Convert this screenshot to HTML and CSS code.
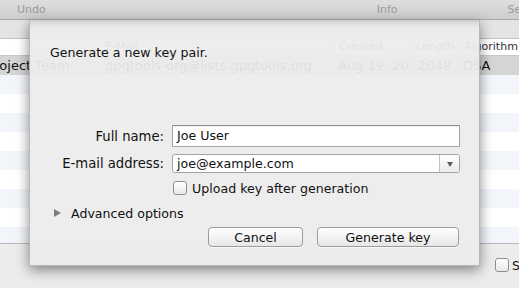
FILE: index.html
```html
<!DOCTYPE html>
<html lang="en">
<head>
  <meta charset="UTF-8">
  <title>GPG Keychain</title>
  <link rel="stylesheet" href="styles.css">
</head>
<body>
  <div class="window">
    <div class="toolbar">
      <span class="tool tool-undo">Undo</span>
      <span class="tool tool-info">Info</span>
      <span class="tool tool-search">Search</span>
    </div>
    <div class="filterbar"></div>

    <div class="keylist">
      <div class="keyrow keyhead">
        <span class="cell c-name"></span>
        <span class="cell c-mail">E-Mail</span>
        <span class="cell c-created">Created</span>
        <span class="cell c-length">Length</span>
        <span class="cell c-algo">Algorithm</span>
      </div>
      <div class="keyrow selected">
        <span class="cell c-name">GPGTools Project Team</span>
        <span class="cell c-mail">gpgtools-org@lists.gpgtools.org</span>
        <span class="cell c-created">Aug 19, 2010</span>
        <span class="cell c-length">2048</span>
        <span class="cell c-algo">DSA</span>
      </div>
      <div class="keyrow"></div>
      <div class="keyrow"></div>
      <div class="keyrow"></div>
      <div class="keyrow"></div>
      <div class="keyrow"></div>
      <div class="keyrow"></div>
      <div class="keyrow"></div>
      <div class="keyrow"></div>
      <div class="keyrow"></div>
    </div>

    <div class="statusbar">
      <label class="status-check"><span class="checkbox"></span>Show secret keys only</label>
    </div>
  </div>

  <!-- sheet dropped from the toolbar -->
  <div class="sheet">
    <p class="sheet-title">Generate a new key pair.</p>

    <div class="form">
      <label class="form-label" for="fullname">Full name:</label>
      <div class="textfield" id="fullname">Joe User</div>

      <label class="form-label" for="email">E-mail address:</label>
      <div class="combo" id="email">
        <span class="combo-value">joe@example.com</span>
        <span class="combo-arrow"></span>
      </div>

      <span></span>
      <label class="check-row"><span class="checkbox"></span>Upload key after generation</label>
    </div>

    <div class="disclosure">
      <span class="disclosure-arrow"></span>
      <span>Advanced options</span>
    </div>

    <div class="buttons">
      <button class="btn btn-cancel">Cancel</button>
      <button class="btn btn-generate">Generate key</button>
    </div>
  </div>
</body>
</html>
```

FILE: styles.css
```css
body {
  margin: 0;
  width: 519px;
  height: 288px;
  overflow: hidden;
  font-family: 'DejaVu Sans', sans-serif;
  font-size: 12.6px;
  color: #111111;
  background-color: #ececec;
  position: relative;
}

.window {
  display: flex;
  flex-direction: column;
  height: 288px;
}

.toolbar {
  height: 19px;
  border-bottom: 1px solid #a9a9a9;
  background: linear-gradient(#dedede, #cdcdcd);
  display: flex;
  align-items: center;
  white-space: nowrap;
  overflow: hidden;
}

.tool {
  font-size: 11px;
  color: #9a9a9a;
}

.tool-undo {
  margin-left: 17px;
}

.tool-info {
  margin-left: 331px;
}

.tool-search {
  margin-left: 110px;
}

.filterbar {
  height: 18px;
  background-color: #e4e4e4;
  border-bottom: 1px solid #c2c2c2;
}

.keylist {
  flex-grow: 1;
  overflow: hidden;
  background-color: #ffffff;
  font-size: 13px;
}

.keyrow {
  display: flex;
  height: 19px;
  align-items: center;
  white-space: nowrap;
}

.keyrow:nth-child(odd) {
  background-color: #f2f5fa;
}

.keyrow.keyhead {
  height: 16px;
  background-color: #ffffff;
  border-bottom: 1px solid #c8c8c8;
  color: #333333;
  font-size: 11px;
}

.keyrow.selected {
  background-color: #d5d5d5;
}

.cell {
  overflow: hidden;
  box-sizing: border-box;
}

.c-name {
  width: 100px;
  text-indent: -77px;
}

.c-mail {
  width: 235px;
  padding-left: 5px;
}

.c-created {
  width: 76px;
  padding-left: 3px;
}

.c-length {
  width: 48px;
  text-align: right;
  padding-right: 8px;
}

.c-algo {
  flex-grow: 1;
  padding-left: 4px;
}

.keyhead .c-algo,
.keyhead .c-length,
.keyhead .c-created {
  border-left: 1px solid #d8d8d8;
}

.keyhead .c-length {
  padding-right: 5px;
}

.statusbar {
  height: 44px;
  border-top: 1px solid #b9b9b9;
  display: flex;
  align-items: center;
  overflow: hidden;
  white-space: nowrap;
}

.status-check {
  display: flex;
  align-items: center;
  gap: 3px;
  margin-left: 495px;
  margin-top: -2px;
}

.checkbox {
  display: inline-block;
  flex-shrink: 0;
  width: 12px;
  height: 12px;
  border: 1px solid #8e8e8e;
  border-radius: 3px;
  background: linear-gradient(#ffffff, #e9e9e9);
  box-shadow: inset 0 1px 0 #ffffff;
}

/* sheet */

.sheet {
  position: absolute;
  left: 29px;
  top: 20px;
  width: 451px;
  height: 246px;
  box-sizing: border-box;
  padding: 25px 20px 18px 20px;
  background-color: rgba(236, 236, 236, 0.94);
  border: 1px solid rgba(0, 0, 0, 0.22);
  border-top: none;
  box-shadow: 0 4px 12px rgba(0, 0, 0, 0.45), inset 0 9px 8px -8px rgba(0, 0, 0, 0.22);
  display: flex;
  flex-direction: column;
}

.sheet-title {
  margin: 0;
  line-height: 16px;
  color: #111111;
}

.form {
  margin-top: 64px;
  display: grid;
  grid-template-columns: 114px 288px;
  column-gap: 8px;
  row-gap: 7px;
  align-items: center;
}

.form-label {
  text-align: right;
  font-size: 13.2px;
  color: #111111;
  white-space: nowrap;
}

.textfield {
  height: 22px;
  box-sizing: border-box;
  border: 1px solid #a6a6a6;
  border-top-color: #8e8e8e;
  background-color: #ffffff;
  padding-left: 4px;
  line-height: 20px;
  box-shadow: inset 0 1px 1px rgba(0, 0, 0, 0.08);
}

.combo {
  height: 19px;
  box-sizing: border-box;
  border: 1px solid #a3a3a3;
  border-radius: 3px;
  background-color: #ffffff;
  display: flex;
  align-items: center;
}

.combo-value {
  flex-grow: 1;
  padding-left: 4px;
  line-height: 17px;
}

.combo-arrow {
  width: 19px;
  height: 17px;
  border-left: 1px solid #c2c2c2;
  background: linear-gradient(#ffffff, #ececec);
  border-radius: 0 2px 2px 0;
  position: relative;
}

.combo-arrow::after {
  content: '';
  position: absolute;
  left: 7px;
  top: 7px;
  border-left: 3px solid transparent;
  border-right: 3px solid transparent;
  border-top: 5px solid #5a5a5a;
}

.check-row {
  display: flex;
  align-items: center;
  gap: 5px;
  height: 14px;
  margin-top: 1px;
  margin-left: 1px;
  white-space: nowrap;
}

.disclosure {
  margin-top: 10px;
  display: flex;
  align-items: center;
  height: 16px;
}

.disclosure-arrow {
  width: 0;
  height: 0;
  margin-left: 4px;
  margin-right: 10px;
  border-top: 4px solid transparent;
  border-bottom: 4px solid transparent;
  border-left: 7px solid #7c7c7c;
}

.buttons {
  margin-top: auto;
  display: flex;
  justify-content: flex-end;
  gap: 14px;
}

.btn {
  height: 20px;
  box-sizing: border-box;
  border: 1px solid #9c9c9c;
  border-radius: 4px;
  background: linear-gradient(#ffffff, #f1f1f1 60%, #e6e6e6);
  font-family: 'DejaVu Sans', sans-serif;
  font-size: 12.6px;
  color: #111111;
  padding: 0;
  box-shadow: 0 1px 0 rgba(255, 255, 255, 0.7);
}

.btn-cancel {
  width: 95px;
}

.btn-generate {
  width: 142px;
}
```
